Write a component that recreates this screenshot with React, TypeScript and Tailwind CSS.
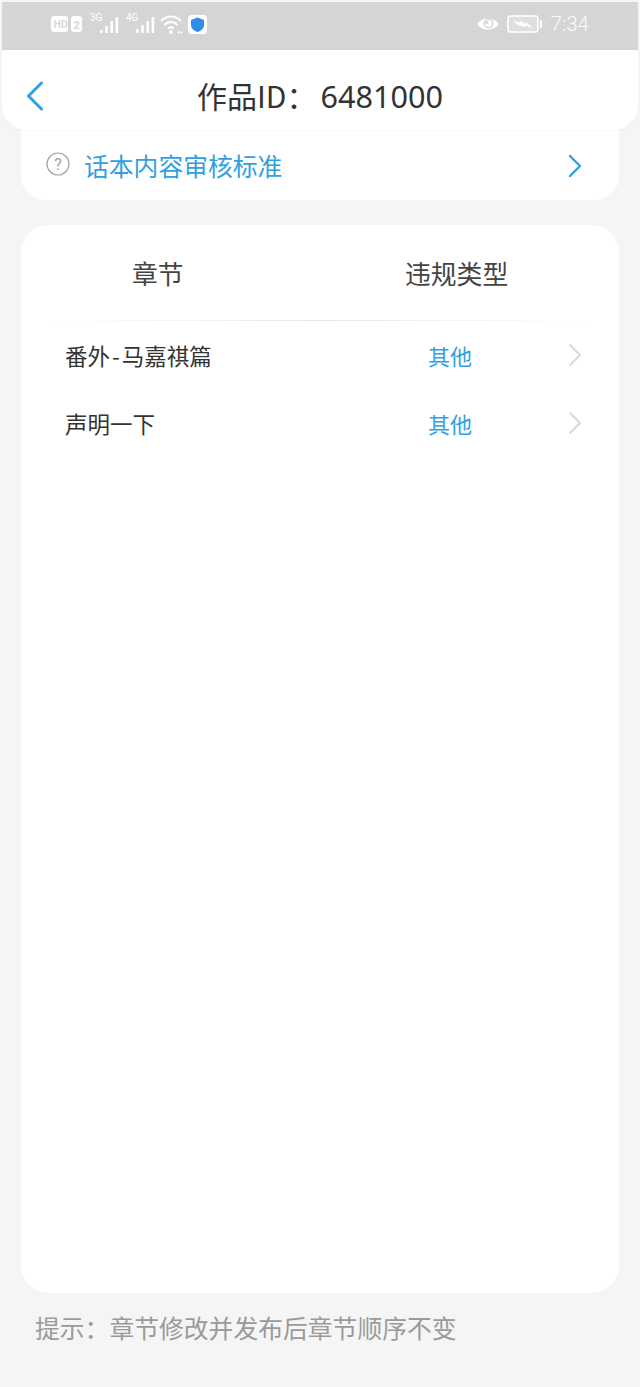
import React from "react";

const font = { fontFamily: '"Noto Sans CJK SC", "Noto Sans", sans-serif' };

function Signal({ bars, label, color = "#fff" }: { bars: number[]; label: string; color?: string }) {
  return (
    <svg width="32" height="24" viewBox="0 0 32 24">
      <text x="0" y="9" fontSize="10" fill={color} fontFamily="Roboto, sans-serif">{label}</text>
      {bars.map((h, i) => (
        <rect key={i} x={10 + i * 5.2} y={21 - h} width="2.6" height={h} fill={color} rx="0.4" />
      ))}
    </svg>
  );
}

function Chevron({ color, w = 2.4 }: { color: string; w?: number }) {
  return (
    <svg width="14" height="24" viewBox="0 0 14 24" fill="none">
      <path d="M2 2 L12 12 L2 22" stroke={color} strokeWidth={w} strokeLinecap="round" strokeLinejoin="round" />
    </svg>
  );
}

function Row({ name }: { name: React.ReactNode }) {
  return (
    <div className="flex items-center h-[68px] pl-[44px] pr-[37px]">
      <span className="w-[364px] text-[22.5px] text-[#333333] leading-none -mt-[4px]">{name}</span>
      <span className="text-[22px] text-[#2ea1e0] leading-none -mt-[4px] -ml-[1px]">其他</span>
      <span className="ml-auto -mt-[5px] flex">
        <Chevron color="#d8d8d8" w={1.8} />
      </span>
    </div>
  );
}

export default function App() {
  return (
    <div className="w-[640px] h-[1387px] bg-[#f5f5f5] overflow-hidden flex flex-col" style={font}>
      <div className="relative z-20 bg-white rounded-b-[24px] mx-[2px] mt-[2px] w-[636px] h-[128px] flex flex-col shadow-[0_1px_1px_rgba(0,0,0,0.03)]">
        <div className="h-[48px] bg-[#d5d5d5] flex items-center pl-[49px] pr-[49px] pb-[4px] text-white">
          <svg width="32" height="18" viewBox="0 0 32 18" className="mr-[1px]">
            <rect x="0" y="1" width="17" height="16" rx="3" fill="#fff" />
            <text x="2.5" y="13" fontSize="10.5" fill="#d5d5d5" fontFamily="Roboto, sans-serif" fontWeight="500">HD</text>
            <rect x="20" y="1" width="11" height="16" rx="3" fill="#fff" />
            <text x="22.5" y="13.5" fontSize="11" fill="#d5d5d5" fontFamily="Roboto, sans-serif" fontWeight="700">2</text>
          </svg>
          <span className="ml-[6px] flex"><Signal label="3G" bars={[3, 7, 12, 16]} /></span>
          <span className="ml-[4px] flex"><Signal label="4G" bars={[4, 8, 12, 16]} /></span>
          <svg width="24" height="22" viewBox="0 0 24 22" fill="none" className="ml-[1px]">
            <path d="M2 8 C8 2 16 2 22 8" stroke="#fff" strokeWidth="2" />
            <path d="M5.5 12 C9 8 15 8 18.5 12" stroke="#fff" strokeWidth="2" />
            <path d="M9 15.5 C11 14 13 14 15 15.5" stroke="#fff" strokeWidth="2" />
            <circle cx="12" cy="19" r="2" fill="#fff" />
            <circle cx="20" cy="19.5" r="1.2" fill="#fff" />
            <circle cx="23" cy="19.5" r="1" fill="#fff" />
          </svg>
          <svg width="19" height="19" viewBox="0 0 19 19" className="ml-[5px]">
            <rect width="19" height="19" rx="3.5" fill="#fff" />
            <path d="M9.5 2.5 L16 5 V10 C16 13.5 13 15.8 9.5 17 C6 15.8 3 13.5 3 10 V5 Z" fill="#2f8fe8" />
          </svg>
          <svg width="24" height="16" viewBox="0 0 24 16" fill="none" className="ml-auto">
            <path d="M1 8 C6 0.5 18 0.5 23 8 C18 15.5 6 15.5 1 8 Z" fill="#fff" />
            <circle cx="12.5" cy="7.5" r="5" fill="#d5d5d5" />
            <circle cx="12.5" cy="7.5" r="3.4" fill="#fff" />
            <circle cx="11" cy="6.5" r="1.6" fill="#d5d5d5" />
          </svg>
          <svg width="35" height="18" viewBox="0 0 35 18" fill="none" className="ml-[7px]">
            <rect x="1" y="1" width="30" height="16" rx="2.5" stroke="#fff" strokeWidth="1.6" fill="#dfdfdf" />
            <path d="M6 5 L13 8 L12.5 5.5 L19 9 L18.5 6.5 L26 13 L17.5 10.5 L18 12.5 L11 9.5 L11.5 11 Z" fill="#fff" />
            <rect x="33" y="5" width="2" height="8" rx="0.8" fill="#fff" />
          </svg>
          <span className="ml-[9px] text-[20.5px] leading-none text-[#fbfbfb]" style={{ fontFamily: "Roboto, sans-serif", fontWeight: 300 }}>7:34</span>
        </div>
        <div className="relative flex-1 flex items-start justify-center pt-[27px]">
          <span className="absolute left-[24px] top-[31px] flex">
            <svg width="18" height="30" viewBox="0 0 18 30" fill="none">
              <path d="M15.5 2 L2.5 15 L15.5 28" stroke="#2ea1e4" strokeWidth="3" strokeLinecap="round" strokeLinejoin="round" />
            </svg>
          </span>
          <span className="text-[30px] leading-[36px] text-[#333333] whitespace-pre">
            作品ID{"\uFF1A"}<span className="text-[30.6px] ml-[4px]" style={{ fontFamily: '"Noto Sans", sans-serif' }}>6481000</span>
          </span>
        </div>
      </div>

      <div className="relative z-10 mx-[21px] h-[70px] bg-white rounded-b-[24px] flex items-center pl-[25px] pr-[37px] shrink-0">
        <span className="flex -mt-[2px]">
          <svg width="24" height="24" viewBox="0 0 24 24" fill="none">
            <circle cx="12" cy="12" r="11" stroke="#a3a3a3" strokeWidth="1.2" />
            <text x="12" y="17.5" textAnchor="middle" fontSize="16" fill="#a3a3a3" fontFamily="Roboto, sans-serif">?</text>
          </svg>
        </span>
        <span className="ml-[14px] text-[24.8px] leading-none text-[#2ea1e0]">话本内容审核标准</span>
        <span className="ml-auto flex mt-[2px]">
          <Chevron color="#2ea1e4" w={2.4} />
        </span>
      </div>

      <div className="mt-[25px] mx-[21px] h-[1068px] bg-white rounded-[28px] flex flex-col shrink-0">
        <div className="flex items-center h-[95px] text-[25.8px] text-[#444444] leading-none">
          <span className="ml-[111px] w-[273px]">章节</span>
          <span>违规类型</span>
        </div>
        <div className="mx-[30px] h-[1px] bg-gradient-to-r from-white via-[#e8e8e8] to-white" />
        <div className="pt-[2px]">
          <Row name={<>番外<span className="px-[2px]">-</span>马嘉祺篇</>} />
          <Row name="声明一下" />
        </div>
      </div>

      <div className="pl-[35px] pt-[19px] text-[24.8px] leading-[30px] text-[#9a9a9a] whitespace-pre">提示{"\uFF1A"}章节修改并发布后章节顺序不变</div>
    </div>
  );
}
